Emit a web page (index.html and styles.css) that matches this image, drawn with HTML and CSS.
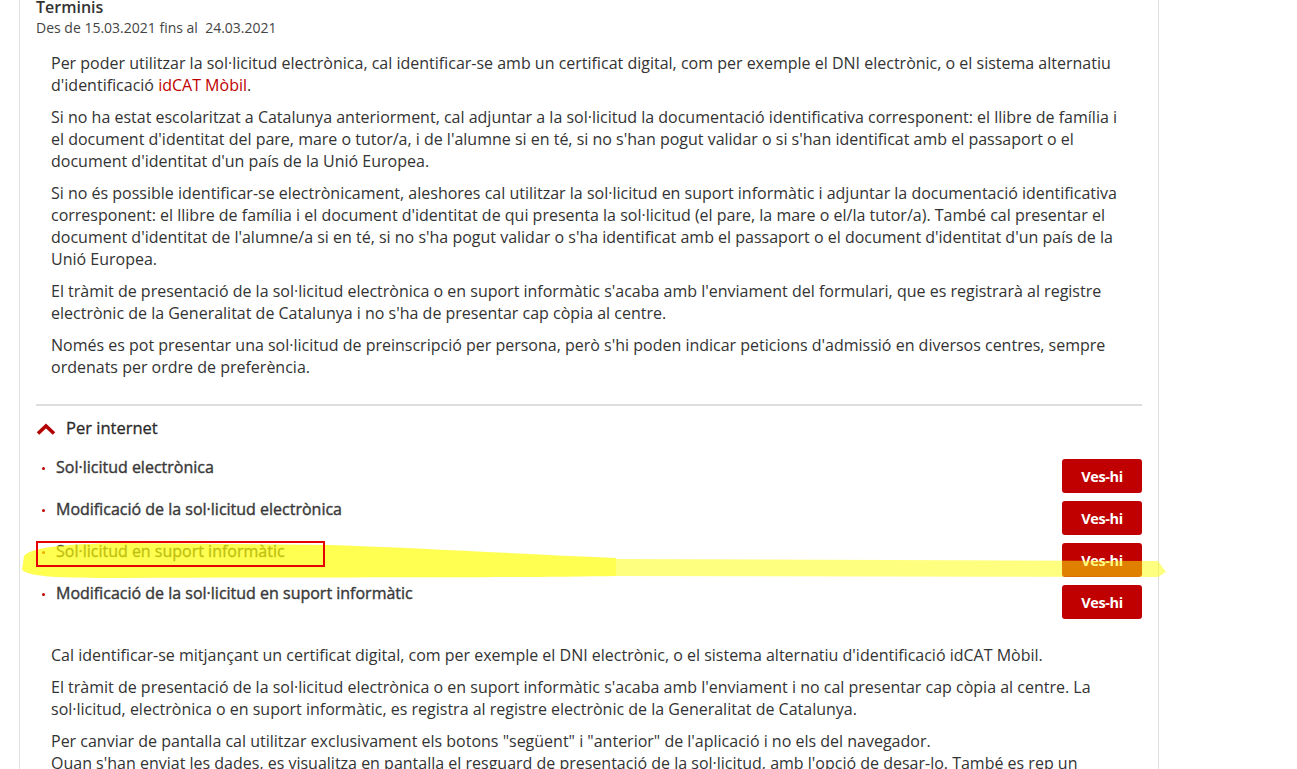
FILE: index.html
```html
<!DOCTYPE html>
<html>
<head>
<meta charset="utf-8">
<title>Preinscripció</title>
<link rel="stylesheet" href="styles.css">
</head>
<body>
<div class="card">
  <div class="title">Terminis</div>
  <div class="dates">Des de 15.03.2021 fins al &nbsp;24.03.2021</div>
  <div class="intro">
    <p>Per poder utilitzar la sol·licitud electrònica, cal identificar-se amb un certificat digital, com per exemple el DNI electrònic, o el sistema alternatiu d'identificació <a class="link" href="#">idCAT Mòbil</a>.</p>
    <p>Si no ha estat escolaritzat a Catalunya anteriorment, cal adjuntar a la sol·licitud la documentació identificativa corresponent: el llibre de família i el document d'identitat del pare, mare o tutor/a, i de l'alumne si en té, si no s'han pogut validar o si s'han identificat amb el passaport o el document d'identitat d'un país de la Unió Europea.</p>
    <p>Si no és possible identificar-se electrònicament, aleshores cal utilitzar la sol·licitud en suport informàtic i adjuntar la documentació identificativa corresponent: el llibre de família i el document d'identitat de qui presenta la sol·licitud (el pare, la mare o el/la tutor/a). També cal presentar el document d'identitat de l'alumne/a si en té, si no s'ha pogut validar o s'ha identificat amb el passaport o el document d'identitat d'un país de la Unió Europea.</p>
    <p>El tràmit de presentació de la sol·licitud electrònica o en suport informàtic s'acaba amb l'enviament del formulari, que es registrarà al registre electrònic de la Generalitat de Catalunya i no s'ha de presentar cap còpia al centre.</p>
    <p>Només es pot presentar una sol·licitud de preinscripció per persona, però s'hi poden indicar peticions d'admissió en diversos centres, sempre ordenats per ordre de preferència.</p>
  </div>
  <div class="section">
    <div class="section-head">
      <svg class="chevron" width="20" height="12" viewBox="0 0 20 12"><polyline points="2,10.5 10,3 18,10.5" fill="none" stroke="#b30000" stroke-width="3.6" stroke-linejoin="miter"/></svg>
      <span>Per internet</span>
    </div>
    <ul class="links">
      <li class="row"><span class="item"><span class="dot"></span>Sol·licitud electrònica</span><a class="btn" href="#">Ves-hi</a></li>
      <li class="row"><span class="item"><span class="dot"></span>Modificació de la sol·licitud electrònica</span><a class="btn" href="#">Ves-hi</a></li>
      <li class="row"><span class="item"><span class="dot"></span>Sol·licitud en suport informàtic</span><a class="btn" href="#">Ves-hi</a></li>
      <li class="row"><span class="item"><span class="dot"></span>Modificació de la sol·licitud en suport informàtic</span><a class="btn" href="#">Ves-hi</a></li>
    </ul>
    <div class="notes">
      <p>Cal identificar-se mitjançant un certificat digital, com per exemple el DNI electrònic, o el sistema alternatiu d'identificació idCAT Mòbil.</p>
      <p>El tràmit de presentació de la sol·licitud electrònica o en suport informàtic s'acaba amb l'enviament i no cal presentar cap còpia al centre. La sol·licitud, electrònica o en suport informàtic, es registra al registre electrònic de la Generalitat de Catalunya.</p>
      <p>Per canviar de pantalla cal utilitzar exclusivament els botons "següent" i "anterior" de l'aplicació i no els del navegador.<br>Quan s'han enviat les dades, es visualitza en pantalla el resguard de presentació de la sol·licitud, amb l'opció de desar-lo. També es rep un correu electrònic de confirmació.</p>
    </div>
  </div>
</div>
<svg class="marker" width="1297" height="769" viewBox="0 0 1297 769">
  <path d="M24,556 C30,548 60,544 120,543 L330,545 C420,548 520,554 616,558 L616,576 C500,578 300,577 120,578 C60,578 30,577 22,570 Z" fill="rgba(255,255,0,0.68)"/>
  <path d="M616,559 L1158,561 L1166,572 L1158,577 L616,576 Z" fill="rgba(255,255,0,0.5)"/>
</svg>
<div class="redbox"></div>
</body>
</html>
```
FILE: styles.css
```css
html, body {
  margin: 0;
  padding: 0;
  background: #fff;
}
body {
  font-family: "Open Sans", "Liberation Sans", sans-serif;
  color: #333;
  overflow: hidden;
  font-feature-settings: "locl" 0;
}
.card {
  margin: -4px 0 0 19px;
  width: 1140px;
  box-sizing: border-box;
  border-left: 1px solid #e0e0e0;
  border-right: 1px solid #e0e0e0;
  padding: 0 16px 0 16px;
  min-height: 800px;
}
.title {
  font-size: 16px;
  line-height: 22px;
  font-weight: 600;
  color: #333;
}
.dates {
  font-size: 14px;
  line-height: 20px;
  color: #444;
}
.intro {
  padding: 14px 15px 0 15px;
}
.intro p, .notes p {
  margin: 0 0 10px 0;
  font-size: 16px;
  line-height: 22px;
  color: #333;
}
.link {
  color: #c00000;
  text-decoration: none;
}
.section {
  margin-top: 26px;
  border-top: 2px solid #dedede;
  padding-top: 11px;
}
.section-head {
  display: flex;
  align-items: center;
  gap: 10px;
  font-size: 16.5px;
  line-height: 22px;
  font-weight: 400;
  color: #2a2a2a;
  -webkit-text-stroke: 0.3px #2a2a2a;
}
.chevron {
  display: block;
  margin-top: 1px;
}
.links {
  list-style: none;
  margin: 17px 0 0 0;
  padding: 0;
}
.row {
  display: flex;
  justify-content: space-between;
  align-items: flex-start;
  padding-bottom: 5px;
}
.item {
  display: flex;
  align-items: center;
  font-size: 16px;
  line-height: 22px;
  font-weight: 400;
  color: #3a3a3a;
  -webkit-text-stroke: 0.4px #3a3a3a;
}
.dot {
  width: 3px;
  height: 3px;
  border-radius: 50%;
  background: #c00000;
  margin: 2px 11px 0 6px;
}
.btn {
  margin-top: 3px;
  width: 80px;
  height: 34px;
  display: flex;
  align-items: center;
  justify-content: center;
  background: #c00000;
  border-radius: 3px;
  color: #fff;
  font-weight: 700;
  font-size: 14.5px;
  letter-spacing: -0.4px;
  text-decoration: none;
}
.notes {
  padding: 20px 18px 0 15px;
}
.marker {
  position: absolute;
  left: 0;
  top: 0;
  pointer-events: none;
}
.redbox {
  position: absolute;
  left: 36px;
  top: 541px;
  width: 289px;
  height: 26px;
  box-sizing: border-box;
  border: 2px solid #e60000;
}
```
